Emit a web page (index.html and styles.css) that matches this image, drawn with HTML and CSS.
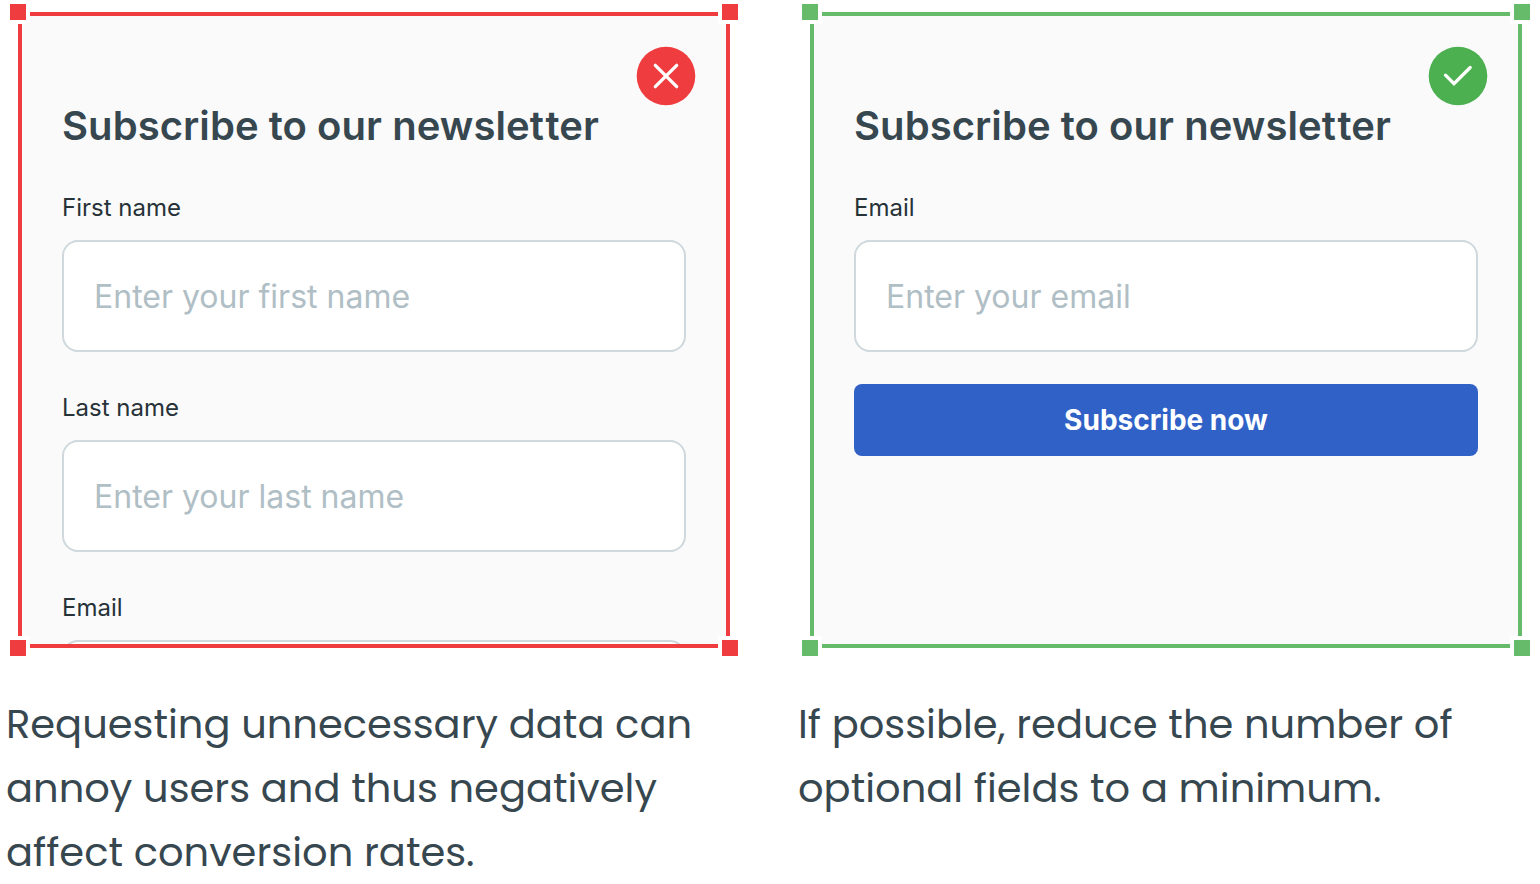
FILE: index.html
```html
<!DOCTYPE html>
<html lang="en">
<head>
    <meta charset="UTF-8">
    <meta name="viewport" content="width=device-width, initial-scale=1.0">
    <title>Newsletter form: do and don't</title>
    <link rel="stylesheet" href="styles.css">
</head>
<body>
    <main class="comparison">
        <!-- Don't -->
        <section class="example dont">
            <div class="frame">
                <form class="form">
                    <h2>Subscribe to our newslet<span>ter</span></h2>
                    <div class="input-group">
                        <label for="firstName">First name</label>
                        <input type="text" id="firstName" placeholder="Enter your first name">
                    </div>
                    <div class="input-group">
                        <label for="lastName">Last name</label>
                        <input type="text" id="lastName" placeholder="Enter your last name">
                    </div>
                    <div class="input-group">
                        <label for="email">Email</label>
                        <input type="email" id="email">
                    </div>
                </form>
                <svg class="badge" viewBox="0 0 60 60">
                    <circle cx="30" cy="30" r="29.3"/>
                    <path d="M19.300 19.300L40.700 40.700M40.700 19.300L19.300 40.700"/>
                </svg>
                <span class="handle top-left"></span>
                <span class="handle top-right"></span>
                <span class="handle bottom-left"></span>
                <span class="handle bottom-right"></span>
            </div>
            <p class="caption">
                Requesting unnecessary data can<br>
                annoy users and thus negatively<br>
                affect conversion rates.
            </p>
        </section>

        <!-- Do -->
        <section class="example do">
            <div class="frame">
                <form class="form">
                    <h2>Subscribe to our newslet<span>ter</span></h2>
                    <div class="input-group">
                        <label for="subscribeEmail">Email</label>
                        <input type="email" id="subscribeEmail" placeholder="Enter your email">
                    </div>
                    <button type="button">Subscribe now</button>
                </form>
                <svg class="badge" viewBox="0 0 60 60">
                    <circle cx="30" cy="30" r="29.3"/>
                    <path d="M17.500 29.200L26 37.700L42.200 21.500"/>
                </svg>
                <span class="handle top-left"></span>
                <span class="handle top-right"></span>
                <span class="handle bottom-left"></span>
                <span class="handle bottom-right"></span>
            </div>
            <p class="caption">
                If possible, reduce the number of<br>
                optional fields to a minimum.
            </p>
        </section>
    </main>
</body>
</html>
```
FILE: styles.css
```css
* {
    box-sizing: border-box;
}

body {
    margin: 0;
    background: #fff;
    font-family: 'Inter', sans-serif;
    color: #37474f;
    overflow: hidden;
}

.comparison {
    display: flex;
    gap: 80px;
    padding: 12px 0 0 18px;
}

.example {
    flex: none;
    width: 712px;
}

.dont {
    --frame-color: #ef3c3f;
    --badge-color: #ef3c3f;
}

.do {
    --frame-color: #66bb6a;
    --badge-color: #4caf50;
}

.frame {
    position: relative;
    height: 636px;
    border: 4px solid var(--frame-color);
    background: #fafafa;
}

/* Form */
.form {
    height: 100%;
    padding: 86px 40px 0;
    overflow: hidden;
}

.form h2 {
    margin: 0 0 34px;
    font-size: 40px;
    font-weight: 600;
    line-height: 48px;
    letter-spacing: 0.06px;
    white-space: nowrap;
}

/* opens up the tight "tt" pair */
.form h2 span {
    margin-left: 1.5px;
}

.input-group {
    margin-bottom: 32px;
}

.input-group label {
    display: block;
    margin-bottom: 8px;
    font-size: 24px;
    line-height: 48px;
    color: #263238;
}

.input-group input {
    display: block;
    width: 100%;
    height: 112px;
    padding: 0 30px;
    border: 2px solid #cfd8dc;
    border-radius: 16px;
    background: #fff;
    font-family: inherit;
    font-size: 32px;
    outline: none;
}

.input-group input::placeholder {
    color: #b0bec5;
    opacity: 1;
}

.form button {
    width: 100%;
    height: 72px;
    border: none;
    border-radius: 8px;
    background: #3061c7;
    color: #fff;
    font-family: inherit;
    font-size: 28px;
    font-weight: 700;
    cursor: pointer;
}

/* Status badge */
.badge {
    position: absolute;
    top: 30px;
    right: 30px;
    width: 60px;
    height: 60px;
}

.badge circle {
    fill: var(--badge-color);
}

.badge path {
    fill: none;
    stroke: #fff;
    stroke-width: 3.3;
    stroke-linecap: round;
}

/* Selection handles on the frame corners */
.handle {
    position: absolute;
    width: 24px;
    height: 24px;
    border: 4px solid #fff;
    background: var(--frame-color);
}

.top-left {
    top: -16px;
    left: -16px;
}

.top-right {
    top: -16px;
    right: -16px;
}

.bottom-left {
    bottom: -16px;
    left: -16px;
}

.bottom-right {
    bottom: -16px;
    right: -16px;
}

/* Caption */
.caption {
    margin: 44px 0 0 -12px;
    font-family: 'Poppins', 'Inter', sans-serif;
    font-size: 40px;
    line-height: 64px;
    white-space: nowrap;
}
```
